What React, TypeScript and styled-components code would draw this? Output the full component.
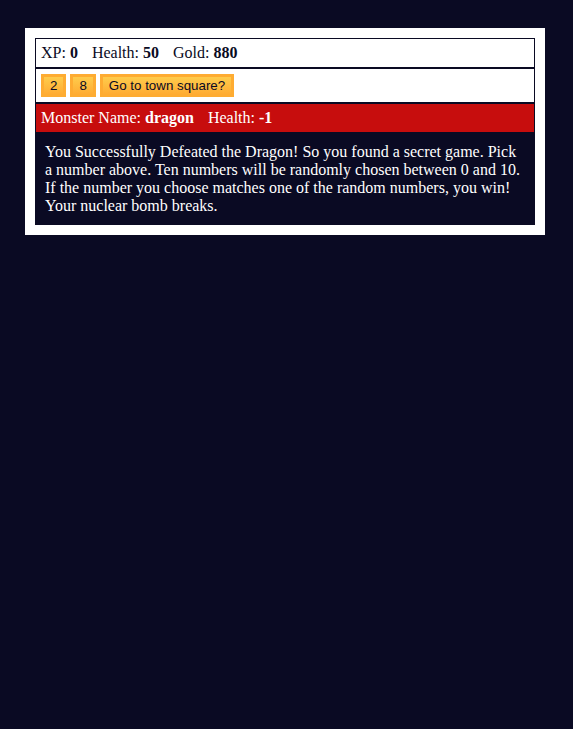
import styled, { createGlobalStyle } from 'styled-components';

const GlobalStyle = createGlobalStyle`
  body {
    margin: 0;
    background-color: #0a0a23;
    font-family: "Liberation Serif", "Times New Roman", serif;
    font-size: 16px;
  }
`;

const Game = styled.div`
  width: 500px;
  background-color: #ffffff;
  color: #ffffff;
  margin: 28px 0 0 25px;
  padding: 10px;
`;

const Panel = styled.div<{ $tone?: 'light' | 'monster' }>`
  border: 1px solid #0a0a23;
  padding: 5px;
  color: ${({ $tone }) => ($tone === 'monster' ? '#ffffff' : '#0a0a23')};
  background-color: ${({ $tone }) => ($tone === 'monster' ? '#c70d0d' : 'transparent')};
`;

const Stat = styled.span`
  padding-right: 10px;
`;

const Button = styled.button`
  cursor: pointer;
  font-family: "Liberation Sans", Arial, sans-serif;
  font-size: 13.333px;
  padding: 1px 6px;
  color: #0a0a23;
  background-color: #feac32;
  background-image: linear-gradient(#fecc4c, #ffac33);
  border: 3px solid #feac32;
`;

const Text = styled.div`
  background-color: #0a0a23;
  color: #ffffff;
  padding: 10px;
`;

export default function App() {
  return (
    <>
      <GlobalStyle />
      <Game>
        <Panel>
          <Stat>
            XP: <strong>0</strong>
          </Stat>{' '}
          <Stat>
            Health: <strong>50</strong>
          </Stat>{' '}
          <Stat>
            Gold: <strong>880</strong>
          </Stat>
        </Panel>
        <Panel>
          <Button>2</Button> <Button>8</Button> <Button>Go to town square?</Button>
        </Panel>
        <Panel $tone="monster">
          <Stat>
            Monster Name: <strong>dragon</strong>
          </Stat>{' '}
          <Stat>
            Health: <strong>-1</strong>
          </Stat>
        </Panel>
        <Text>
          You Successfully Defeated the Dragon! So you found a secret game. Pick a number above. Ten
          numbers will be randomly chosen between 0 and 10. If the number you choose matches one of
          the random numbers, you win! Your nuclear bomb breaks.
        </Text>
      </Game>
    </>
  );
}
